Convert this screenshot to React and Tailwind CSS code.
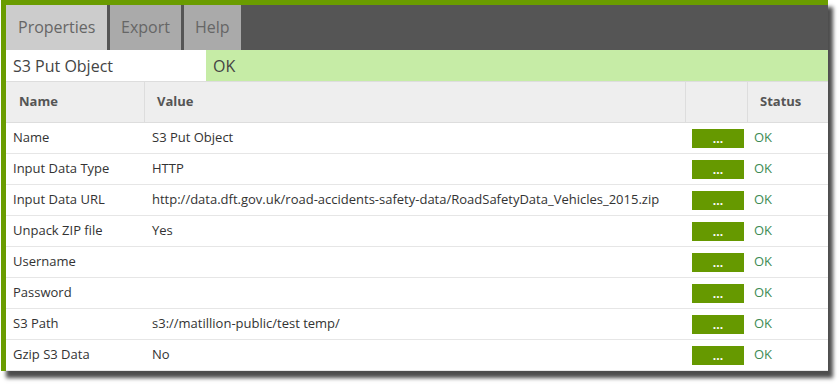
import React from 'react';

const rows = [
  ['Name', 'S3 Put Object'],
  ['Input Data Type', 'HTTP'],
  ['Input Data URL', 'http://data.dft.gov.uk/road-accidents-safety-data/RoadSafetyData_Vehicles_2015.zip'],
  ['Unpack ZIP file', 'Yes'],
  ['Username', ''],
  ['Password', ''],
  ['S3 Path', 's3://matillion-public/test temp/'],
  ['Gzip S3 Data', 'No'],
];

export default function App() {
  return (
    <div className="w-[840px] h-[390px] bg-white overflow-hidden" style={{ fontFamily: '"Open Sans", sans-serif' }}>
      <div className="ml-px w-[827px] border-t-[5px] border-l-[5px] border-[#6a9c00] bg-white shadow-[5px_7px_4px_rgba(0,0,0,0.7)]">
        <div className="flex h-[45px] bg-[#555555]">
          <div className="w-[101px] bg-[#cccccc] text-[#666] text-[16px] pl-[12px] pt-[10px]">Properties</div>
          <div className="w-[3px]" />
          <div className="w-[71px] bg-[#aaaaaa] text-[#666] text-[16px] pl-[11px] pt-[10px]">Export</div>
          <div className="w-[3px]" />
          <div className="w-[57px] bg-[#aaaaaa] text-[#666] text-[16px] pl-[11px] pt-[10px]">Help</div>
        </div>
        <div className="flex h-[31px] text-[16px] text-[#444]">
          <div className="w-[200px] bg-white pl-[7px] pt-[4px]">S3 Put Object</div>
          <div className="flex-1 bg-[#c6eca6] pl-[7px] pt-[4px]">OK</div>
        </div>
        <div className="grid grid-cols-[139px_541px_62px_80px] h-[42px] bg-[#eeeeee] border-t border-b border-[#dddddd] text-[13px] font-bold text-[#555]">
          <div className="pl-[13px] pt-[10px] border-r border-[#dddddd]">Name</div>
          <div className="pl-[12px] pt-[10px] border-r border-[#dddddd]">Value</div>
          <div className="border-r border-[#dddddd]" />
          <div className="pl-[12px] pt-[10px]">Status</div>
        </div>
        {rows.map(([name, value]) => (
          <div key={name} className="grid grid-cols-[139px_541px_62px_80px] h-[31px] items-center border-b border-[#e6e6e6] text-[13px] text-[#333]">
            <div className="pl-[7px]">{name}</div>
            <div className="pl-[7px]">{value}</div>
            <div className="pl-[6px]">
              <div className="w-[52px] h-[19px] bg-[#669900] text-white text-[12px] font-bold leading-[19px] text-center">...</div>
            </div>
            <div className="pl-[6px] text-[#3d8b55] text-[13px]">OK</div>
          </div>
        ))}
      </div>
    </div>
  );
}
